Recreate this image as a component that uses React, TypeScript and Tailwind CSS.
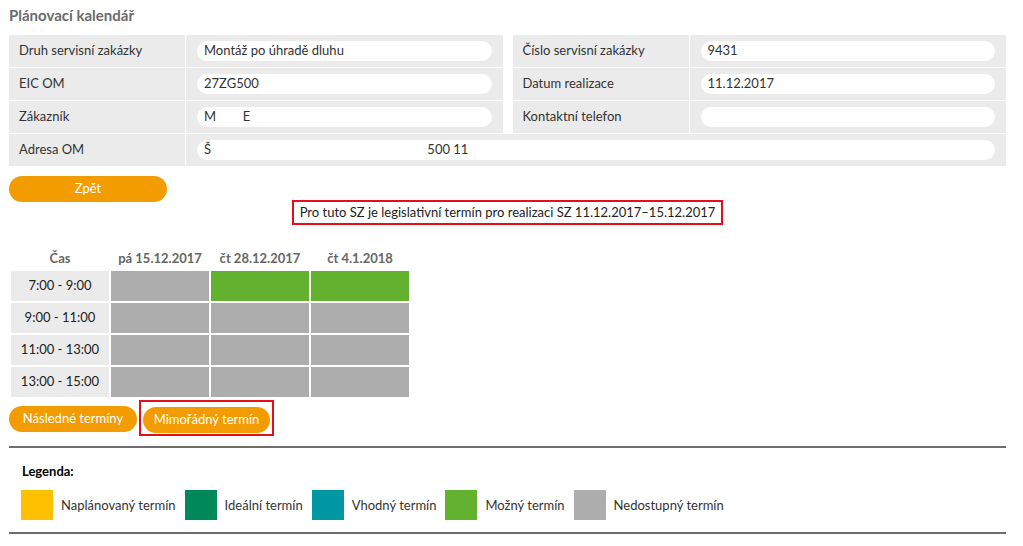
import React from "react";

const font = { fontFamily: "Lato, 'Open Sans', sans-serif" };

const InfoRow = ({ label, value }: { label: string; value: string }) => (
  <div className="flex h-[32px] gap-px">
    <div className="w-[176px] bg-[#ebebeb] flex items-center pl-[10px] text-[13px] text-[#333]">{label}</div>
    <div className="flex-1 bg-[#ebebeb] flex items-center pl-[11px] pr-[11px]">
      <div className="h-[20px] w-full rounded-full bg-white flex items-center pl-[7px] text-[13px] text-[#333] whitespace-pre">
        {value}
      </div>
    </div>
  </div>
);

const slots = ["7:00 - 9:00", "9:00 - 11:00", "11:00 - 13:00", "13:00 - 15:00"];
const days = ["pá 15.12.2017", "čt 28.12.2017", "čt 4.1.2018"];

const legend = [
  { color: "bg-[#ffc000]", label: "Naplánovaný termín" },
  { color: "bg-[#00875a]", label: "Ideální termín" },
  { color: "bg-[#0099a3]", label: "Vhodný termín" },
  { color: "bg-[#62b22f]", label: "Možný termín" },
  { color: "bg-[#adadad]", label: "Nedostupný termín" },
];

const App = () => {
  return (
    <div className="min-h-screen bg-white pl-[9px] w-[1006px]" style={font}>
      <h1 className="pt-[4px] h-[35px] text-[15px] font-bold text-[#6b6b6b]">Plánovací kalendář</h1>

      <div className="flex flex-col gap-px">
        <div className="grid grid-cols-2 gap-x-[10px]">
          <div className="flex flex-col gap-px">
            <InfoRow label="Druh servisní zakázky" value="Montáž po úhradě dluhu" />
            <InfoRow label="EIC OM" value="27ZG500" />
            <InfoRow label="Zákazník" value={"M        E"} />
          </div>
          <div className="flex flex-col gap-px">
            <InfoRow label="Číslo servisní zakázky" value="9431" />
            <InfoRow label="Datum realizace" value="11.12.2017" />
            <InfoRow label="Kontaktní telefon" value="" />
          </div>
        </div>
        <InfoRow
          label="Adresa OM"
          value={"Š                                                                 500 11"}
        />
      </div>

      <div className="flex flex-col mt-[10px]">
        <button className="w-[158px] h-[26px] rounded-full bg-[#f39c00] text-white text-[13px]">Zpět</button>
        <div className="flex justify-center -mt-[2px]">
          <div className="border-2 border-[#e3101b] h-[25px] px-[6px] flex items-center text-[13px] text-[#222]">
            Pro tuto SZ je legislativní termín pro realizaci SZ 11.12.2017–15.12.2017
          </div>
        </div>
      </div>

      <div className="ml-[2px] mt-[24px] grid grid-cols-[98px_98px_98px_98px] gap-x-[2px] gap-y-[2px] text-[13px]">
        <div className="h-[20px] flex items-center justify-center font-bold text-[#666]">Čas</div>
        {days.map((d) => (
          <div key={d} className="h-[20px] flex items-center justify-center font-bold text-[#666]">
            {d}
          </div>
        ))}
        {slots.map((s, i) => (
          <React.Fragment key={s}>
            <div className="h-[30px] bg-[#ebebeb] flex items-center justify-center text-[#222]">{s}</div>
            <div className="h-[30px] bg-[#adadad]" />
            <div className={i === 0 ? "h-[30px] bg-[#62b22f]" : "h-[30px] bg-[#adadad]"} />
            <div className={i === 0 ? "h-[30px] bg-[#62b22f]" : "h-[30px] bg-[#adadad]"} />
          </React.Fragment>
        ))}
      </div>

      <div className="flex items-start gap-[2px] mt-[3px]">
        <button className="mt-[6px] w-[128px] h-[26px] rounded-full bg-[#f39c00] text-white text-[13px]">
          Následné termíny
        </button>
        <div className="border-2 border-[#e3101b] pt-[4px] pb-[1px] px-[2px]">
          <button className="w-[127px] h-[26px] rounded-full bg-[#f39c00] text-white text-[13px]">
            Mimořádný termín
          </button>
        </div>
      </div>

      <div className="mt-[10px] h-[2px] bg-[#6e6e6e]" />

      <div className="pl-[13px] pt-[14px] text-[13px] font-bold text-black">Legenda:</div>
      <div className="flex items-center pl-[12px] mt-[9px]">
        {legend.map((l) => (
          <div key={l.label} className="flex items-center mr-[9px]">
            <div className={`w-[32px] h-[30px] ${l.color}`} />
            <span className="ml-[8px] text-[13px] text-[#333]">{l.label}</span>
          </div>
        ))}
      </div>
      <div className="mt-[12px] h-[2px] bg-[#6e6e6e]" />
    </div>
  );
};

export default App;
